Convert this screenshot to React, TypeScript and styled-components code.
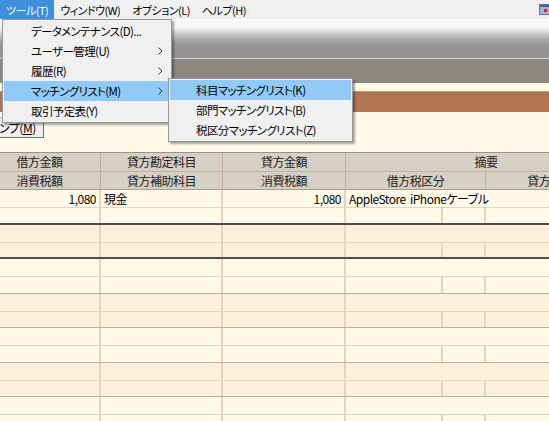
import styled, { createGlobalStyle } from 'styled-components';

const GlobalStyle = createGlobalStyle`
  html, body {
    margin: 0;
    padding: 0;
    overflow: hidden;
    background: #fff9e8;
  }
  body {
    font-family: 'Noto Sans CJK JP', 'Noto Sans', sans-serif;
    font-size: 11px;
    letter-spacing: -0.5px;
    font-feature-settings: 'palt';
    color: #000;
  }
`;

const menuTitles = ['ツール(T)', 'ウィンドウ(W)', 'オプション(L)', 'ヘルプ(H)'];

const toolItems = [
  { label: 'データメンテナンス(D)...', sub: false },
  { label: 'ユーザー管理(U)', sub: true },
  { label: '履歴(R)', sub: true },
  { label: 'マッチングリスト(M)', sub: true, active: true },
  { label: '取引予定表(Y)', sub: false },
];

const matchItems = ['科目マッチングリスト(K)', '部門マッチングリスト(B)', '税区分マッチングリスト(Z)'];

// 伝票グリッドの行データ（2段1組）
const groups = [
  { debit: '1,080', account: '現金', credit: '1,080', memo: 'AppleStore\u00a0\u00a0iPhoneケーブル' },
  {},
  {},
  {},
  {},
  {},
  {},
] as { debit?: string; account?: string; credit?: string; memo?: string }[];

const Arrow = () => (
  <svg width="5" height="8" viewBox="0 0 5 8">
    <polyline points="0.5,0.5 4,4 0.5,7.5" fill="none" stroke="#333" strokeWidth="1" />
  </svg>
);

const ChildIcon = () => (
  <svg width="11" height="11" viewBox="0 0 11 11">
    <rect x="0.5" y="0.5" width="10" height="10" fill="#9fb8d8" stroke="#5878a8" />
    <rect x="1" y="1" width="9" height="2" fill="#3d64a8" />
    <rect x="5" y="5" width="3" height="3" fill="#e02020" />
  </svg>
);

export default function App() {
  return (
    <Page>
      <GlobalStyle />
      <MenuBar>
        {menuTitles.map((t, i) => (
          <MenuTitle key={t} active={i === 0}>
            {t}
          </MenuTitle>
        ))}
        <MenuBarRight>
          <ChildIcon />
        </MenuBarRight>
      </MenuBar>
      <ToolArea />
      <DarkBand />

      <Workspace>
        <TitleBar />
        <ButtonRow>
          <JumpButton>
            ンプ(<u>M</u>)
          </JumpButton>
        </ButtonRow>

        <GridClip>
          <Grid>
            <HeadRow top>
              <HeadCell>借方金額</HeadCell>
              <HeadCell>貸方勘定科目</HeadCell>
              <HeadCell>貸方金額</HeadCell>
              <HeadCell last>摘要</HeadCell>
            </HeadRow>
            <HeadRow>
              <HeadCell>消費税額</HeadCell>
              <HeadCell>貸方補助科目</HeadCell>
              <HeadCell>消費税額</HeadCell>
              <HeadSplit>
                <HeadCell>借方税区分</HeadCell>
                <HeadCell last>貸方税区分</HeadCell>
              </HeadSplit>
            </HeadRow>

            {groups.map((g, i) => (
              <Group
                key={i}
                tone={i % 2 === 0 ? 'light' : 'dark'}
                strong={i < 2}
                h={i % 2 === 0 ? 35 : 34}
              >
                <DataRow>
                  <Cell align="right">{g.debit}</Cell>
                  <Cell>{g.account}</Cell>
                  <Cell align="right">{g.credit}</Cell>
                  <Cell last>{g.memo}</Cell>
                </DataRow>
                <DataRow second>
                  <Cell />
                  <Cell />
                  <Cell />
                  <SubSplit>
                    <SubCell w={97} />
                    <SubCell w={43} />
                    <SubCell w={97} />
                    <SubCell w={43} />
                  </SubSplit>
                </DataRow>
              </Group>
            ))}
          </Grid>
        </GridClip>
      </Workspace>

      <Dropdown>
        {toolItems.map((item) => (
          <MenuItem key={item.label} active={!!item.active} pad={27}>
            <span>{item.label}</span>
            {item.sub && <Arrow />}
          </MenuItem>
        ))}
      </Dropdown>

      <SubMenu>
        {matchItems.map((label, i) => (
          <MenuItem key={label} active={i === 0} pad={26}>
            <span>{label}</span>
          </MenuItem>
        ))}
      </SubMenu>
    </Page>
  );
}

const Page = styled.div`
  position: relative;
  width: 549px;
  height: 421px;
  overflow: hidden;
  display: flex;
  flex-direction: column;
`;

const MenuBar = styled.div`
  height: 19px;
  display: flex;
  align-items: stretch;
  background: #f0f0f0;
  flex-shrink: 0;
`;

const MenuTitle = styled.div<{ active: boolean }>`
  display: flex;
  align-items: center;
  padding: 0 6px;
  background: ${({ active }) => (active ? '#3f8fdd' : 'transparent')};
  color: ${({ active }) => (active ? '#fff' : '#000')};
  white-space: nowrap;
`;

const MenuBarRight = styled.div`
  margin-left: auto;
  display: flex;
  align-items: center;
  margin-right: -1px;
`;

const ToolArea = styled.div`
  height: 39px;
  flex-shrink: 0;
  background: linear-gradient(
    to bottom,
    #fdfdfd 0px,
    #f3f3f3 9px,
    #b9b8b6 18px,
    #989694 25px,
    #959391 39px
  );
  border-bottom: 1px solid #d4d2ce;
`;

const DarkBand = styled.div`
  height: 24px;
  flex-shrink: 0;
  background: #8b877f;
`;

const Workspace = styled.div`
  flex: 1;
  display: flex;
  flex-direction: column;
  background: #fff9e8;
  padding-top: 8px;
`;

const TitleBar = styled.div`
  height: 20px;
  flex-shrink: 0;
  background: #b17651;
  border-top: 1px solid #c99678;
`;

const ButtonRow = styled.div`
  height: 40px;
  flex-shrink: 0;
  padding-top: 5px;
  box-sizing: border-box;
`;

const JumpButton = styled.button`
  height: 21px;
  width: 49px;
  margin-left: -5px;
  padding: 0 0 0 3px;
  text-align: left;
  font: inherit;
  font-size: 12px;
  letter-spacing: -0.5px;
  font-feature-settings: 'palt';
  background: #f0f0f0;
  border: 1px solid #adadad;
  border-right-color: #707070;
  border-bottom-color: #707070;
  color: #000;
  white-space: nowrap;
  overflow: hidden;
`;

const GridClip = styled.div`
  overflow: hidden;
  flex: 1;
`;

const Grid = styled.div`
  width: 647px;
  margin-left: -21px;
`;

const columns = '122px 122px 123px 280px';

const HeadRow = styled.div<{ top?: boolean }>`
  display: grid;
  grid-template-columns: ${columns};
  height: ${({ top }) => (top ? '18px' : '17px')};
  background: #d6cfc4;
  border-top: 1px solid ${({ top }) => (top ? '#9c9284' : '#bdb4a8')};
  border-bottom: ${({ top }) => (top ? 'none' : '1px solid #a89e90')};
  color: #222;
`;

const HeadCell = styled.div<{ last?: boolean }>`
  display: flex;
  align-items: center;
  justify-content: center;
  border-right: ${({ last }) => (last ? 'none' : '1px solid #c9a99a')};
  white-space: nowrap;
  line-height: 1;
  font-size: 12px;
`;

const HeadSplit = styled.div`
  display: grid;
  grid-template-columns: 140px 140px;
`;

const Group = styled.div<{ tone: 'light' | 'dark'; strong: boolean; h: number }>`
  height: ${({ h }) => h}px;
  box-sizing: border-box;
  display: flex;
  flex-direction: column;
  background: ${({ tone }) => (tone === 'light' ? '#fff9e8' : '#fdf0da')};
  border-bottom: ${({ strong }) => (strong ? '2px solid #4e4c48' : '1px solid #b9b1a2')};
`;

const DataRow = styled.div<{ second?: boolean }>`
  display: grid;
  grid-template-columns: ${columns};
  flex: ${({ second }) => (second ? '1' : '0 0 17px')};
  border-bottom: ${({ second }) => (second ? 'none' : '1px solid #ddd5c6')};
`;

const Cell = styled.div<{ align?: 'left' | 'right'; last?: boolean }>`
  display: flex;
  align-items: center;
  justify-content: ${({ align }) => (align === 'right' ? 'flex-end' : 'flex-start')};
  padding: 0 3px;
  border-right: ${({ last }) => (last ? 'none' : '2px solid #ecd0c0')};
  white-space: nowrap;
  line-height: 1;
  font-size: 12px;
`;

const SubSplit = styled.div`
  display: flex;
`;

const SubCell = styled.div<{ w: number }>`
  width: ${({ w }) => w}px;
  flex-shrink: 0;
  box-sizing: border-box;
  border-right: 2px solid #ecd0c0;
`;

const Dropdown = styled.div`
  position: absolute;
  left: 2px;
  top: 19px;
  width: 170px;
  box-sizing: border-box;
  padding: 1px;
  background: #f0f0f0;
  border: 1px solid #979797;
  box-shadow: 2px 2px 2px rgba(0, 0, 0, 0.35);
`;

const SubMenu = styled(Dropdown)`
  left: 168px;
  top: 78px;
  width: 185px;
`;

const MenuItem = styled.div<{ active: boolean; pad: number }>`
  height: 20px;
  display: flex;
  align-items: center;
  justify-content: space-between;
  padding: 0 7px 0 ${({ pad }) => pad}px;
  background: ${({ active }) => (active ? '#91c9f7' : 'transparent')};
  white-space: nowrap;
  font-size: 11.5px;
  letter-spacing: -0.6px;
`;
